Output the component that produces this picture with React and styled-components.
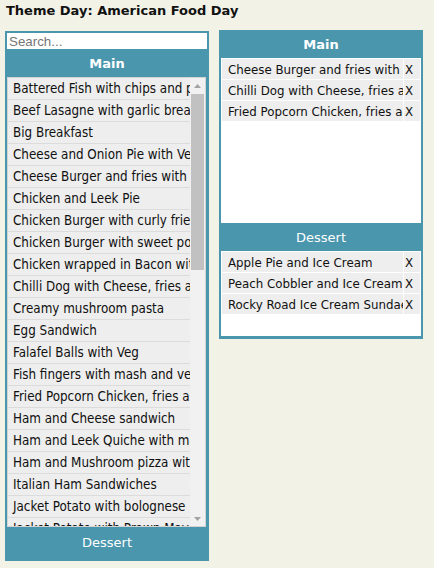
import React from "react";
import styled, { createGlobalStyle } from "styled-components";

const Global = createGlobalStyle`
  html, body { margin: 0; padding: 0; background: #f2f2e6; }
  body { font-family: "DejaVu Sans Condensed", "DejaVu Sans", sans-serif; color: #111; }
`;

const Page = styled.div`
  padding: 3px 5px 0 5px;
`;

const Title = styled.h1`
  margin: 0 0 0 1px;
  font-family: "DejaVu Sans", sans-serif;
  font-size: 13px;
  font-weight: bold;
  line-height: 15px;
  color: #111;
`;

const Columns = styled.div`
  display: flex;
  align-items: flex-start;
  gap: 10px;
  margin-top: 12px;
`;

const Panel = styled.div`
  width: 204px;
  box-sizing: border-box;
  background: #4a96ad;
  padding: ${(p) => p.$pad};
  margin-top: ${(p) => p.$top || 0}px;
  display: flex;
  flex-direction: column;
`;

const Search = styled.input`
  width: 200px;
  height: 16px;
  box-sizing: border-box;
  border: none;
  outline: none;
  padding: 0 2px;
  margin: 0;
  font-family: "Liberation Sans", Arial, sans-serif;
  font-size: 13.33px;
  background: #fff;
  &::placeholder { color: #767676; }
`;

const Header = styled.div`
  height: ${(p) => p.$h || 28}px;
  display: flex;
  align-items: center;
  justify-content: center;
  color: #fff;
  font-size: 13px;
  font-weight: ${(p) => (p.$bold ? "bold" : "normal")};
  font-family: "DejaVu Sans", sans-serif;
  padding-bottom: ${(p) => p.$pb || 0}px;
`;

const ListBox = styled.div`
  display: flex;
  width: 199px;
  height: 450px;
  box-sizing: border-box;
  border: 1px solid #d4d4d4;
  background: #eee;
`;

const List = styled.ul`
  list-style: none;
  margin: 0;
  padding: 0;
  flex: 1;
  min-width: 0;
  overflow: hidden;
`;

const Item = styled.li`
  height: 21px;
  line-height: 21px;
  border-bottom: 1px solid #dcdcdc;
  padding-left: 5px;
  font-size: 13.3px;
  white-space: nowrap;
  overflow: hidden;
  color: #111;
  background: #eee;
`;

const ScrollBar = styled.div`
  width: 15px;
  flex: none;
  background: #f1f1f1;
  display: flex;
  flex-direction: column;
`;

const ScrollButton = styled.div`
  height: 15px;
  flex: none;
  display: flex;
  align-items: center;
  justify-content: center;
`;

const Track = styled.div`
  flex: 1;
  display: flex;
  flex-direction: column;
  padding-top: 1px;
`;

const Thumb = styled.div`
  height: 176px;
  margin: 0 1px;
  background: #c1c1c1;
`;

const Section = styled.div`
  background: #fff;
  height: ${(p) => p.$h}px;
`;

const Table = styled.table`
  width: 200px;
  border-spacing: 1px;
  table-layout: fixed;
  font-size: 13.15px;
`;

const NameCell = styled.td`
  width: 175px;
  height: 20px;
  padding: 0 0 0 6px;
  background: #eee;
  white-space: nowrap;
  overflow: hidden;
  color: #111;
`;

const XCell = styled.td`
  width: 15px;
  padding: 0 0 0 1px;
  background: #eee;
  color: #111;
`;

const mains = [
  "Battered Fish with chips and peas",
  "Beef Lasagne with garlic bread",
  "Big Breakfast",
  "Cheese and Onion Pie with Veg",
  "Cheese Burger and fries with salad",
  "Chicken and Leek Pie",
  "Chicken Burger with curly fries",
  "Chicken Burger with sweet potato fries",
  "Chicken wrapped in Bacon with potatoes",
  "Chilli Dog with Cheese, fries and slaw",
  "Creamy mushroom pasta",
  "Egg Sandwich",
  "Falafel Balls with Veg",
  "Fish fingers with mash and veg",
  "Fried Popcorn Chicken, fries and corn",
  "Ham and Cheese sandwich",
  "Ham and Leek Quiche with mash",
  "Ham and Mushroom pizza with wedges",
  "Italian Ham Sandwiches",
  "Jacket Potato with bolognese",
  "Jacket Potato with Prawn Mayo",
  "Jacket Potato with Tuna Mayo",
  "Lamb Curry with Rice",
  "Macaroni Cheese",
  "Meatballs in Tomato Sauce",
  "Mild Chicken Curry",
  "Pasta Bolognese",
  "Pepperoni Pizza",
  "Pork Sausages with mash",
  "Quorn Nuggets with chips",
  "Roast Beef with Yorkshire Pudding",
  "Roast Chicken dinner",
  "Salmon fishcakes",
  "Sausage Roll with beans",
  "Shepherd's Pie",
  "Spaghetti Carbonara",
  "Sweet and Sour Chicken",
  "Tomato Soup with roll",
  "Tuna Pasta Bake",
  "Turkey Dinner",
  "Vegetable Curry",
  "Vegetable Lasagne",
  "Veggie Burger with fries",
  "Veggie Sausage with mash",
  "Wholemeal Pizza",
];

const chosenMain = [
  "Cheese Burger and fries with salad",
  "Chilli Dog with Cheese, fries and slaw",
  "Fried Popcorn Chicken, fries and corn",
];

const chosenDessert = [
  "Apple Pie and Ice Cream",
  "Peach Cobbler and Ice Cream",
  "Rocky Road Ice Cream Sundae",
];

function Arrow({ down }) {
  return (
    <svg width="7" height="4" viewBox="0 0 7 4">
      <path d={down ? "M0 0H7L3.5 4Z" : "M0 4H7L3.5 0Z"} fill="#a3a3a3" />
    </svg>
  );
}

function Picks({ items }) {
  return (
    <Table>
      <tbody>
        {items.map((t) => (
          <tr key={t}>
            <NameCell>{t}</NameCell>
            <XCell>X</XCell>
          </tr>
        ))}
      </tbody>
    </Table>
  );
}

export default function App() {
  return (
    <>
      <Global />
      <Page>
        <Title>Theme Day: American Food Day</Title>
        <Columns>
          <Panel $pad="2px 2px 0 2px" $top={1}>
            <Search placeholder="Search..." />
            <Header $bold>Main</Header>
            <ListBox>
              <List>
                {mains.map((m) => (
                  <Item key={m}>{m}</Item>
                ))}
              </List>
              <ScrollBar>
                <ScrollButton>
                  <Arrow />
                </ScrollButton>
                <Track>
                  <Thumb />
                </Track>
                <ScrollButton>
                  <Arrow down />
                </ScrollButton>
              </ScrollBar>
            </ListBox>
            <Header $h={31} $pb={3}>Dessert</Header>
          </Panel>
          <Panel $pad="0 2px 3px 2px">
            <Header $bold>Main</Header>
            <Section $h={165}>
              <Picks items={chosenMain} />
            </Section>
            <Header>Dessert</Header>
            <Section $h={85}>
              <Picks items={chosenDessert} />
            </Section>
          </Panel>
        </Columns>
      </Page>
    </>
  );
}
